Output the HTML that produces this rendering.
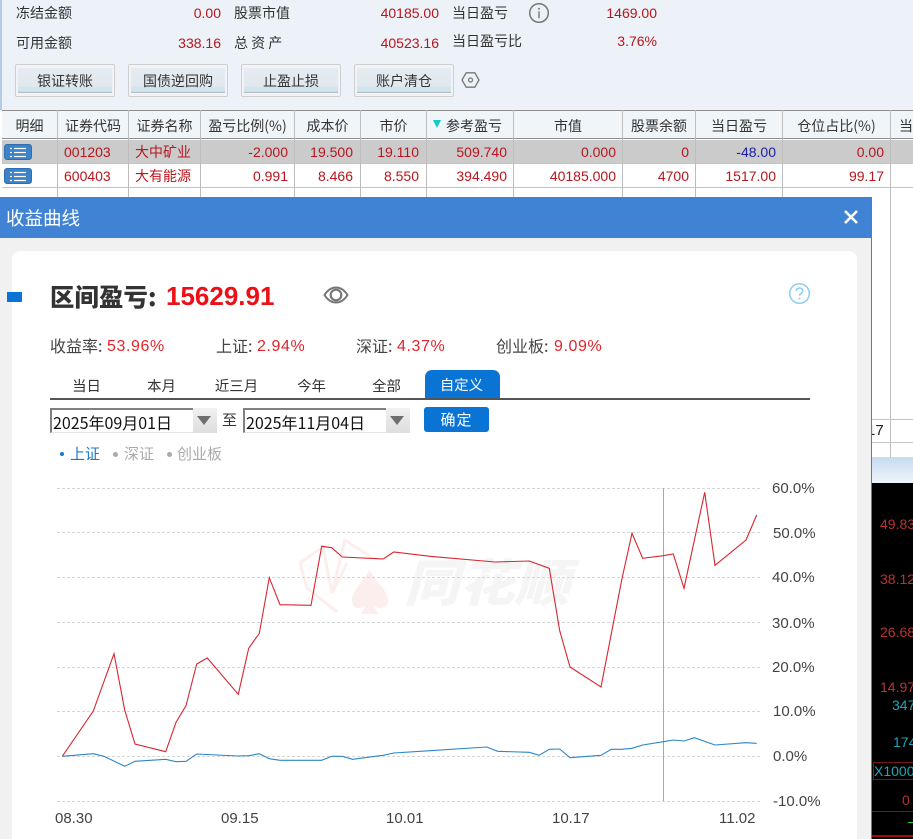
<!DOCTYPE html>
<html lang="zh">
<head>
<meta charset="utf-8">
<style>
html,body{margin:0;padding:0;background:#fff}
body{width:913px;height:839px;position:relative;overflow:hidden;font-family:"Liberation Sans","Noto Sans CJK SC",sans-serif;font-size:14px;color:#333}
.a{position:absolute;white-space:nowrap;line-height:20px}
.r{color:#b9151c}
.h{position:absolute;top:116px;line-height:20px;text-align:center;color:#333;white-space:nowrap}
.v{position:absolute;width:1px;background:#bdbdbd}
.hl{position:absolute;height:1px;background:#c4c4c4}
.cj{font-family:"Noto Sans CJK SC","Liberation Sans",sans-serif}
.btn{position:absolute;top:64px;width:98px;height:31px;border:1px solid #cfcfcf;border-radius:2px;background:#f1f4f6}
.btn div{position:absolute;left:2px;top:3px;right:2px;bottom:3px;background:linear-gradient(#e4ebf1 0,#e1e8ee 74%,#d0e5f0 76%,#d0e5f0 94%,#b9bfc4 96%);text-align:center;line-height:26px;color:#333}
.det{position:absolute;left:4px;width:28px;height:16px;background:#3c82c8;border-radius:3px;border:1px solid #2f6fb0;box-sizing:border-box}
.det svg{position:absolute;left:5px;top:2px}
.tab{position:absolute;top:377px;line-height:18px;color:#333;width:75px;text-align:center;left:0;font-size:14.4px;margin-left:-1px}
.s{font-size:16px;top:335px;color:#444}
.n{font-size:16px;top:337px;color:#e2242a;letter-spacing:.6px}
</style>
</head>
<body>
<!-- top panel -->
<div style="position:absolute;left:0;top:0;width:913px;height:110px;background:#ecf2f7"></div>
<div style="position:absolute;left:0;top:0;width:2px;height:110px;background:#b4cce4"></div>

<span class="a cj" style="left:16px;top:3px">冻结金额</span>
<span class="a r" style="right:692px;top:3px">0.00</span>
<span class="a cj" style="left:234px;top:3px">股票市值</span>
<span class="a r" style="right:474px;top:3px">40185.00</span>
<span class="a cj" style="left:452px;top:3px">当日盈亏</span>
<svg style="position:absolute;left:528px;top:2px" width="22" height="22" viewBox="0 0 22 22"><circle cx="11" cy="11" r="9.3" fill="none" stroke="#777" stroke-width="1.5"/><circle cx="11" cy="6.8" r="1" fill="#777"/><rect x="10.300" y="9.300" width="1.400" height="7" fill="#777"/></svg>
<span class="a r" style="right:256px;top:3px">1469.00</span>

<span class="a cj" style="left:16px;top:33px">可用金额</span>
<span class="a r" style="right:692px;top:33px">338.16</span>
<span class="a cj" style="left:234px;top:33px">总&nbsp;资&nbsp;产</span>
<span class="a r" style="right:474px;top:33px">40523.16</span>
<span class="a cj" style="left:452px;top:31px">当日盈亏比</span>
<span class="a r" style="right:256px;top:31px">3.76%</span>

<div class="btn cj" style="left:15px"><div>银证转账</div></div>
<div class="btn cj" style="left:128px"><div>国债逆回购</div></div>
<div class="btn cj" style="left:241px"><div>止盈止损</div></div>
<div class="btn cj" style="left:354px"><div>账户清仓</div></div>
<svg style="position:absolute;left:461px;top:71px" width="19" height="18" viewBox="0 0 19 18"><path d="M5.200 1.800H13.800L18 9L13.800 16.200H5.200L1 9Z" fill="none" stroke="#777" stroke-width="1.300"/><circle cx="9.500" cy="9" r="2" fill="none" stroke="#777" stroke-width="1.200"/></svg>

<!-- table -->
<div style="position:absolute;left:2px;top:110px;width:911px;height:28px;background:#eff5f9"></div>
<div style="position:absolute;left:2px;top:110px;width:911px;height:1px;background:#8d8d8d"></div>
<div style="position:absolute;left:2px;top:138px;width:911px;height:1px;background:#8d8d8d"></div>
<div style="position:absolute;left:2px;top:140px;width:911px;height:23px;background:#cbcbcb"></div>
<div class="hl" style="left:2px;top:163px;width:911px"></div>
<div class="hl" style="left:2px;top:187px;width:911px"></div>

<div class="v" style="left:57px;top:110px;height:90px"></div>
<div class="v" style="left:128px;top:110px;height:90px"></div>
<div class="v" style="left:200px;top:110px;height:90px"></div>
<div class="v" style="left:294px;top:110px;height:90px"></div>
<div class="v" style="left:360px;top:110px;height:90px"></div>
<div class="v" style="left:426px;top:110px;height:90px"></div>
<div class="v" style="left:513px;top:110px;height:90px"></div>
<div class="v" style="left:622px;top:110px;height:90px"></div>
<div class="v" style="left:695px;top:110px;height:90px"></div>
<div class="v" style="left:782px;top:110px;height:90px"></div>
<div class="v" style="left:890px;top:110px;height:350px"></div>

<span class="h cj" style="left:2px;width:55px">明细</span>
<span class="h cj" style="left:58px;width:70px">证券代码</span>
<span class="h cj" style="left:129px;width:71px">证券名称</span>
<span class="h cj" style="left:201px;width:93px">盈亏比例(%)</span>
<span class="h cj" style="left:295px;width:65px">成本价</span>
<span class="h cj" style="left:361px;width:65px">市价</span>
<svg style="position:absolute;left:433px;top:120px" width="9" height="9"><path d="M0 0H8L4 8Z" fill="#12c8c8"/></svg>
<span class="h cj" style="left:446px">参考盈亏</span>
<span class="h cj" style="left:514px;width:108px">市值</span>
<span class="h cj" style="left:623px;width:72px">股票余额</span>
<span class="h cj" style="left:696px;width:86px">当日盈亏</span>
<span class="h cj" style="left:783px;width:107px">仓位占比(%)</span>
<span class="h cj" style="left:899px">当日</span>

<!-- row1 -->
<div class="det" style="top:144px"><svg width="17" height="11" viewBox="0 0 17 11"><path d="M0 1.500H2M4 1.500H16M0 5.500H2M4 5.500H16M0 9.500H2M4 9.500H16" stroke="#fff" stroke-width="1.200"/></svg></div>
<span class="a r" style="left:64px;top:142px">001203</span>
<span class="a r cj" style="left:135px;top:142px">大中矿业</span>
<span class="a r" style="right:625px;top:142px">-2.000</span>
<span class="a r" style="right:560px;top:142px">19.500</span>
<span class="a r" style="right:494px;top:142px">19.110</span>
<span class="a r" style="right:406px;top:142px">509.740</span>
<span class="a r" style="right:297px;top:142px">0.000</span>
<span class="a r" style="right:224px;top:142px">0</span>
<span class="a" style="right:137px;top:142px;color:#1c1ca6">-48.00</span>
<span class="a r" style="right:29px;top:142px">0.00</span>
<!-- row2 -->
<div class="det" style="top:168px"><svg width="17" height="11" viewBox="0 0 17 11"><path d="M0 1.500H2M4 1.500H16M0 5.500H2M4 5.500H16M0 9.500H2M4 9.500H16" stroke="#fff" stroke-width="1.200"/></svg></div>
<span class="a r" style="left:64px;top:166px">600403</span>
<span class="a r cj" style="left:135px;top:166px">大有能源</span>
<span class="a r" style="right:625px;top:166px">0.991</span>
<span class="a r" style="right:560px;top:166px">8.466</span>
<span class="a r" style="right:494px;top:166px">8.550</span>
<span class="a r" style="right:406px;top:166px">394.490</span>
<span class="a r" style="right:297px;top:166px">40185.000</span>
<span class="a r" style="right:224px;top:166px">4700</span>
<span class="a r" style="right:137px;top:166px">1517.00</span>
<span class="a r" style="right:29px;top:166px">99.17</span>

<!-- right behind dialog -->
<div class="hl" style="left:872px;top:419px;width:41px;background:#c4c4c4"></div>
<div class="hl" style="left:872px;top:442px;width:41px;background:#c4c4c4"></div>
<span class="a" style="left:867px;top:421px;color:#222;font-size:15px">17</span>
<div style="position:absolute;left:872px;top:457px;width:41px;height:26px;background:linear-gradient(#c6daf0,#eef4fb)"></div>
<div style="position:absolute;left:872px;top:483px;width:41px;height:356px;background:#000"></div>
<span class="a" style="left:880px;top:514px;color:#b83232">49.83</span>
<span class="a" style="left:880px;top:569px;color:#b83232">38.12</span>
<span class="a" style="left:880px;top:622px;color:#b83232">26.68</span>
<span class="a" style="left:880px;top:677px;color:#b83232">14.97</span>
<span class="a" style="left:892px;top:695px;color:#1ea6b8">347</span>
<span class="a" style="left:893px;top:732px;color:#1ea6b8">174</span>
<div style="position:absolute;left:873px;top:762px;width:40px;height:18px;border:1px solid #7a1616;border-right:0;box-sizing:border-box"></div>
<span class="a" style="left:874px;top:761px;color:#1ea6b8">X1000</span>
<span class="a" style="left:902px;top:790px;color:#b83232">0</span>
<div style="position:absolute;left:872px;top:811px;width:41px;height:1px;background:#8a1010"></div>
<div style="position:absolute;left:908px;top:822px;width:5px;height:1px;background:#2ed02e"></div>
<div style="position:absolute;left:872px;top:835px;width:41px;height:2px;background:#a00c0c"></div>

<!-- dialog -->
<div style="position:absolute;left:0;top:197px;width:871px;height:642px;background:#f1f1f1"></div>
<div style="position:absolute;left:0;top:197px;width:871px;height:41px;background:#4083d4"></div>
<div style="position:absolute;left:871px;top:197px;width:1px;height:642px;background:#4a7fb8"></div>
<span class="a cj" style="left:6px;top:207px;font-size:18.500px;color:#fff;line-height:22px">收益曲线</span>
<svg style="position:absolute;left:843px;top:209px" width="16" height="16" viewBox="0 0 16 16"><path d="M2 2L14 14M14 2L2 14" stroke="#fff" stroke-width="2.600"/></svg>

<div style="position:absolute;left:12px;top:251px;width:845px;height:588px;background:#fff;border-radius:8px 8px 0 0"></div>
<div style="position:absolute;left:7px;top:292px;width:15px;height:10px;background:#0a74d4"></div>

<span class="a cj" style="left:50px;top:280px;font-size:24.300px;font-weight:900;color:#333;line-height:32px;letter-spacing:.2px">区间盈亏:</span>
<span class="a" style="left:166px;top:280px;font-size:26px;font-weight:700;color:#ee0f16;line-height:32px">15629.91</span>
<svg style="position:absolute;left:323px;top:285px" width="26" height="20" viewBox="0 0 26 20"><path d="M1.500 10C5 4.500 9 2.500 13 2.500S21 4.500 24.500 10C21 15.500 17 17.500 13 17.500S5 15.500 1.500 10Z" fill="none" stroke="#777" stroke-width="2"/><circle cx="13" cy="10" r="5.300" fill="none" stroke="#777" stroke-width="2.200"/></svg>
<svg style="position:absolute;left:788px;top:282px" width="23" height="23" viewBox="0 0 23 23"><circle cx="11.500" cy="11.500" r="9.800" fill="none" stroke="#8fcdf2" stroke-width="1.500"/><path d="M8.300 9C8.300 7 9.800 6 11.500 6S14.700 7 14.700 9C14.700 11.200 11.500 11.300 11.500 13.800" fill="none" stroke="#8fcdf2" stroke-width="1.500"/><circle cx="11.500" cy="16.600" r="1" fill="#8fcdf2"/></svg>

<span class="a cj s" style="left:50px">收益率:</span>
<span class="a n" style="left:107px">53.96%</span>
<span class="a cj s" style="left:216px">上证:</span>
<span class="a n" style="left:257px">2.94%</span>
<span class="a cj s" style="left:356px">深证:</span>
<span class="a n" style="left:397px">4.37%</span>
<span class="a cj s" style="left:496px">创业板:</span>
<span class="a n" style="left:554px">9.09%</span>

<span class="tab cj" style="left:50px">当日</span>
<span class="tab cj" style="left:125px">本月</span>
<span class="tab cj" style="left:200px">近三月</span>
<span class="tab cj" style="left:275px">今年</span>
<span class="tab cj" style="left:350px">全部</span>
<div class="cj" style="position:absolute;left:425px;top:370px;width:75px;height:28px;background:#0a74d4;border-radius:7px 7px 0 0;color:#fff;text-align:center;line-height:30px;font-size:14.400px;text-indent:-2px">自定义</div>
<div style="position:absolute;left:50px;top:398px;width:760px;height:2px;background:#555"></div>

<!-- date inputs -->
<div style="position:absolute;left:50px;top:408px;width:143px;height:25px;box-sizing:border-box;border-top:2px solid #808080;border-left:2px solid #808080;border-bottom:1px solid #e4e4e4;background:#fff;font-size:16px;color:#111;line-height:25px;padding-left:1px;white-space:nowrap" class="cj">2025年09月01日</div>
<div style="position:absolute;left:193px;top:408px;width:24px;height:25px;background:linear-gradient(#f0f0f0,#dedede)"><svg style="position:absolute;left:4px;top:8px" width="15" height="10"><path d="M0 0H14L7 9Z" fill="#6e6e6e"/></svg></div>
<span class="a cj" style="left:222px;top:410px;font-size:15px">至</span>
<div style="position:absolute;left:243px;top:408px;width:143px;height:25px;box-sizing:border-box;border-top:2px solid #808080;border-left:2px solid #808080;border-bottom:1px solid #e4e4e4;background:#fff;font-size:16px;color:#111;line-height:25px;padding-left:1px;white-space:nowrap" class="cj">2025年11月04日</div>
<div style="position:absolute;left:386px;top:408px;width:24px;height:25px;background:linear-gradient(#f0f0f0,#dedede)"><svg style="position:absolute;left:4px;top:8px" width="15" height="10"><path d="M0 0H14L7 9Z" fill="#6e6e6e"/></svg></div>
<div class="cj" style="position:absolute;left:424px;top:407px;width:65px;height:25px;background:#0a74d4;border-radius:3px;color:#fff;text-align:center;line-height:25px;font-size:15px;letter-spacing:1px">确定</div>

<!-- legend -->
<div style="position:absolute;left:60px;top:452px;width:4px;height:4px;border-radius:50%;background:#1978c8"></div>
<span class="a cj" style="left:70px;top:444px;font-size:15px;color:#1978c8">上证</span>
<div style="position:absolute;left:113px;top:452px;width:5px;height:5px;border-radius:50%;background:#aaa"></div>
<span class="a cj" style="left:124px;top:444px;font-size:15px;color:#aaa">深证</span>
<div style="position:absolute;left:167px;top:452px;width:5px;height:5px;border-radius:50%;background:#aaa"></div>
<span class="a cj" style="left:177px;top:444px;font-size:15px;color:#aaa">创业板</span>

<!-- chart -->
<svg style="position:absolute;left:0;top:0" width="913" height="839" viewBox="0 0 913 839">
  <g fill="none" stroke="#fdeeee" stroke-width="3">
    <path d="M300 563L323 547L332 593L345 540L372 558"/>
    <path d="M300 563L307 588L337 612"/>
    <path d="M332 593L347 563"/>
  </g>
  <path d="M369.500 570C376 582 388 590 388 601C388 608 380 610 374 606L378 614H361L365 606C359 610 352 608 352 601C352 590 363 582 369.500 570Z" fill="#fdeeee"/>
  <text x="404" y="601" font-family="Noto Sans CJK SC,sans-serif" font-size="50" font-weight="900" font-style="italic" fill="#f5f5f5" textLength="166" lengthAdjust="spacingAndGlyphs">同花顺</text>
  <g stroke="#d6d6d6" stroke-width="1" stroke-dasharray="3 2">
    <path d="M57 488.500H762M57 532.500H762M57 577.500H762M57 622.500H762M57 667.500H762M57 711.500H762M57 756.500H762M57 801.500H762"/>
  </g>
  <path d="M663.500 488V801" stroke="#a8a8a8" stroke-width="1"/>
  <polyline fill="none" stroke="#d8262e" stroke-width="1.100" points="62.300,756.300 93.300,711 114,653.700 124.700,710 135,744 165.700,751.700 176,722.300 186,705.700 196.700,664 207.300,658 238.300,694.300 248.700,648.300 259.300,633.300 269.300,577.700 280,604.700 311,605.300 321.700,546.300 331.700,547.700 342.300,557 383.300,559 393.700,552 430,556.300 495,562 529.300,561 549.300,568.300 559.700,630.700 570,667 601,687 621.700,580 632,533.300 642.700,558.300 663.300,555.700 673.300,554 684,588.300 704.700,492.300 715,565.300 746,540 756.700,515"/>
  <polyline fill="none" stroke="#2c86c6" stroke-width="1.100" points="62.300,756.300 93.300,753.700 104,756.300 124.700,766.300 135,761.300 165.700,759.300 176,761.700 186,761.300 196.700,754 238.300,756 248.700,755.700 259.300,753.700 269.300,758.700 280,760.300 321.700,760.300 331.700,756.300 342.300,756.300 352.700,759.300 383.300,755.300 393.700,753 430,750.700 486.700,747 497.700,751.300 529.300,752.300 539,755.300 549.300,749.300 559.700,749 570,757.700 601,755.300 611.300,749.300 621.700,749.300 632,748.300 642.700,745 663.300,741.700 673.300,740 684,741 694.300,737.700 715,745 746,742.700 756.700,743.300"/>
  <g font-family="Liberation Sans,sans-serif" font-size="15" fill="#444">
    <text x="772" y="493">60.0%</text>
    <text x="773" y="538">50.0%</text>
    <text x="772" y="582">40.0%</text>
    <text x="772" y="628">30.0%</text>
    <text x="772" y="672">20.0%</text>
    <text x="773" y="716">10.0%</text>
    <text x="773" y="761">0.0%</text>
    <text x="773" y="806">-10.0%</text>
    <text x="55" y="823">08.30</text>
    <text x="221" y="823">09.15</text>
    <text x="386" y="823">10.01</text>
    <text x="552" y="823">10.17</text>
    <text x="719" y="823">11.02</text>
  </g>
</svg>
</body>
</html>
